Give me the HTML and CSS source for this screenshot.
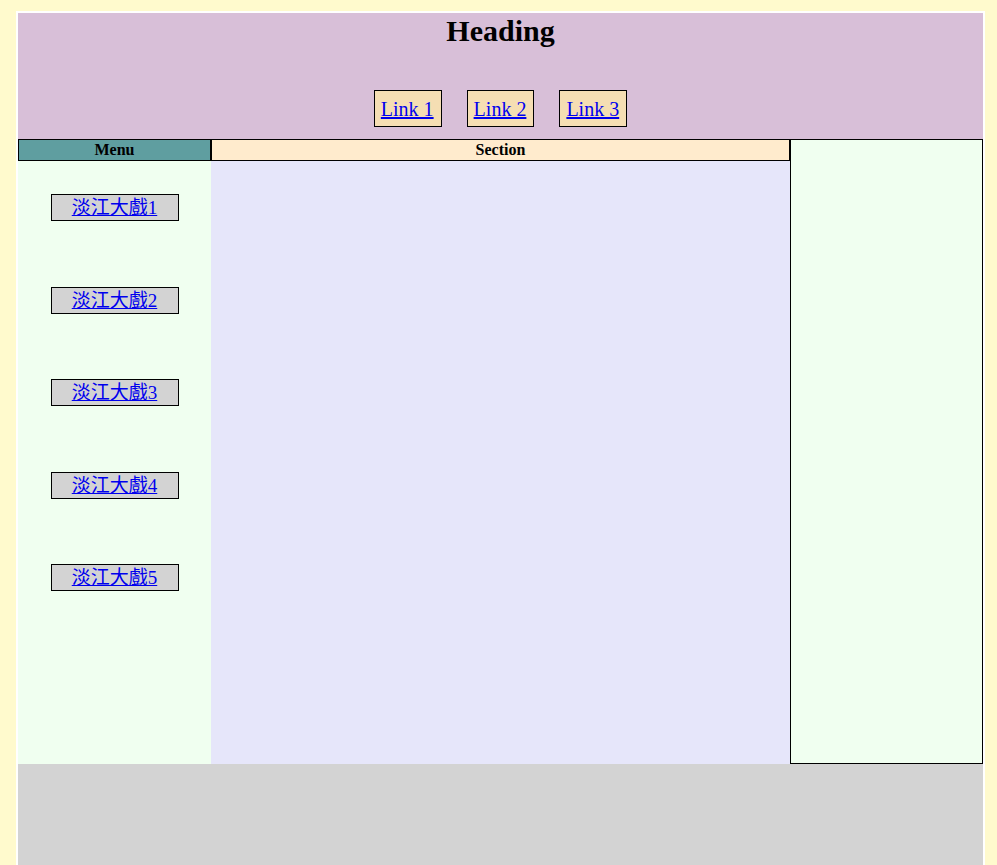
FILE: index.html
```html
<!DOCTYPE html>
<html lang="zh-Hant">
<head>
<meta charset="utf-8">
<title>Layout</title>
<link rel="stylesheet" href="styles.css">
</head>
<body>
<div class="page">
  <header class="top">
    <h1 class="title">Heading</h1>
    <nav class="links">
      <a class="link-box" href="#">Link 1</a>
      <a class="link-box" href="#">Link 2</a>
      <a class="link-box" href="#">Link 3</a>
    </nav>
  </header>
  <main class="body-grid">
    <div class="menu">
      <div class="col-head menu-head">Menu</div>
      <ul class="menu-list">
        <li><a class="menu-item" href="#">淡江大戲1</a></li>
        <li><a class="menu-item" href="#">淡江大戲2</a></li>
        <li><a class="menu-item" href="#">淡江大戲3</a></li>
        <li><a class="menu-item" href="#">淡江大戲4</a></li>
        <li><a class="menu-item" href="#">淡江大戲5</a></li>
      </ul>
    </div>
    <section class="section">
      <div class="col-head section-head">Section</div>
    </section>
    <aside class="aside"></aside>
  </main>
  <footer class="footer"></footer>
</div>
</body>
</html>
```

FILE: styles.css
```css
html, body {
  margin: 0;
  padding: 0;
}

body {
  background: #fffacd;
  font-family: "Liberation Serif", "Noto Sans CJK TC", serif;
  color: #000;
  padding: 11px 0 0 16px;
}

.page {
  width: 965px;
  border: 2px solid #fff;
  border-bottom: none;
  background: #fff;
}

.top {
  background: #d8bfd8;
  padding: 0 0 12px;
  text-align: center;
}

.title {
  margin: 0;
  font-size: 30px;
  line-height: 36px;
  font-weight: bold;
  padding-bottom: 41px;
}

.links {
  display: flex;
  justify-content: center;
  gap: 25px;
}

.link-box {
  display: block;
  background: #f5deb3;
  border: 1px solid #000;
  padding: 7px 7px 5px 6px;
  font-size: 20px;
  line-height: 23px;
  color: #0000ee;
}

.body-grid {
  display: grid;
  grid-template-columns: 193px 579px 193px;
  height: 625px;
}

.col-head {
  border: 1px solid #000;
  font-weight: bold;
  font-size: 16px;
  line-height: 20px;
  text-align: center;
}

.menu {
  background: #f0fff0;
}

.menu-head {
  background: #5f9ea0;
}

.menu-list {
  list-style: none;
  margin: 0;
  padding: 33px 0 0;
  display: flex;
  flex-direction: column;
  align-items: center;
  gap: 65.5px;
}

.menu-item {
  display: block;
  width: 126px;
  height: 25px;
  line-height: 26px;
  background: #d3d3d3;
  border: 1px solid #000;
  text-align: center;
  font-size: 19px;
  color: #0000ee;
}

.section {
  background: #e6e6fa;
}

.section-head {
  background: #ffebcd;
}

.aside {
  background: #f0fff0;
  border: 1px solid #000;
}

.footer {
  background: #d3d3d3;
  height: 140px;
}
```
